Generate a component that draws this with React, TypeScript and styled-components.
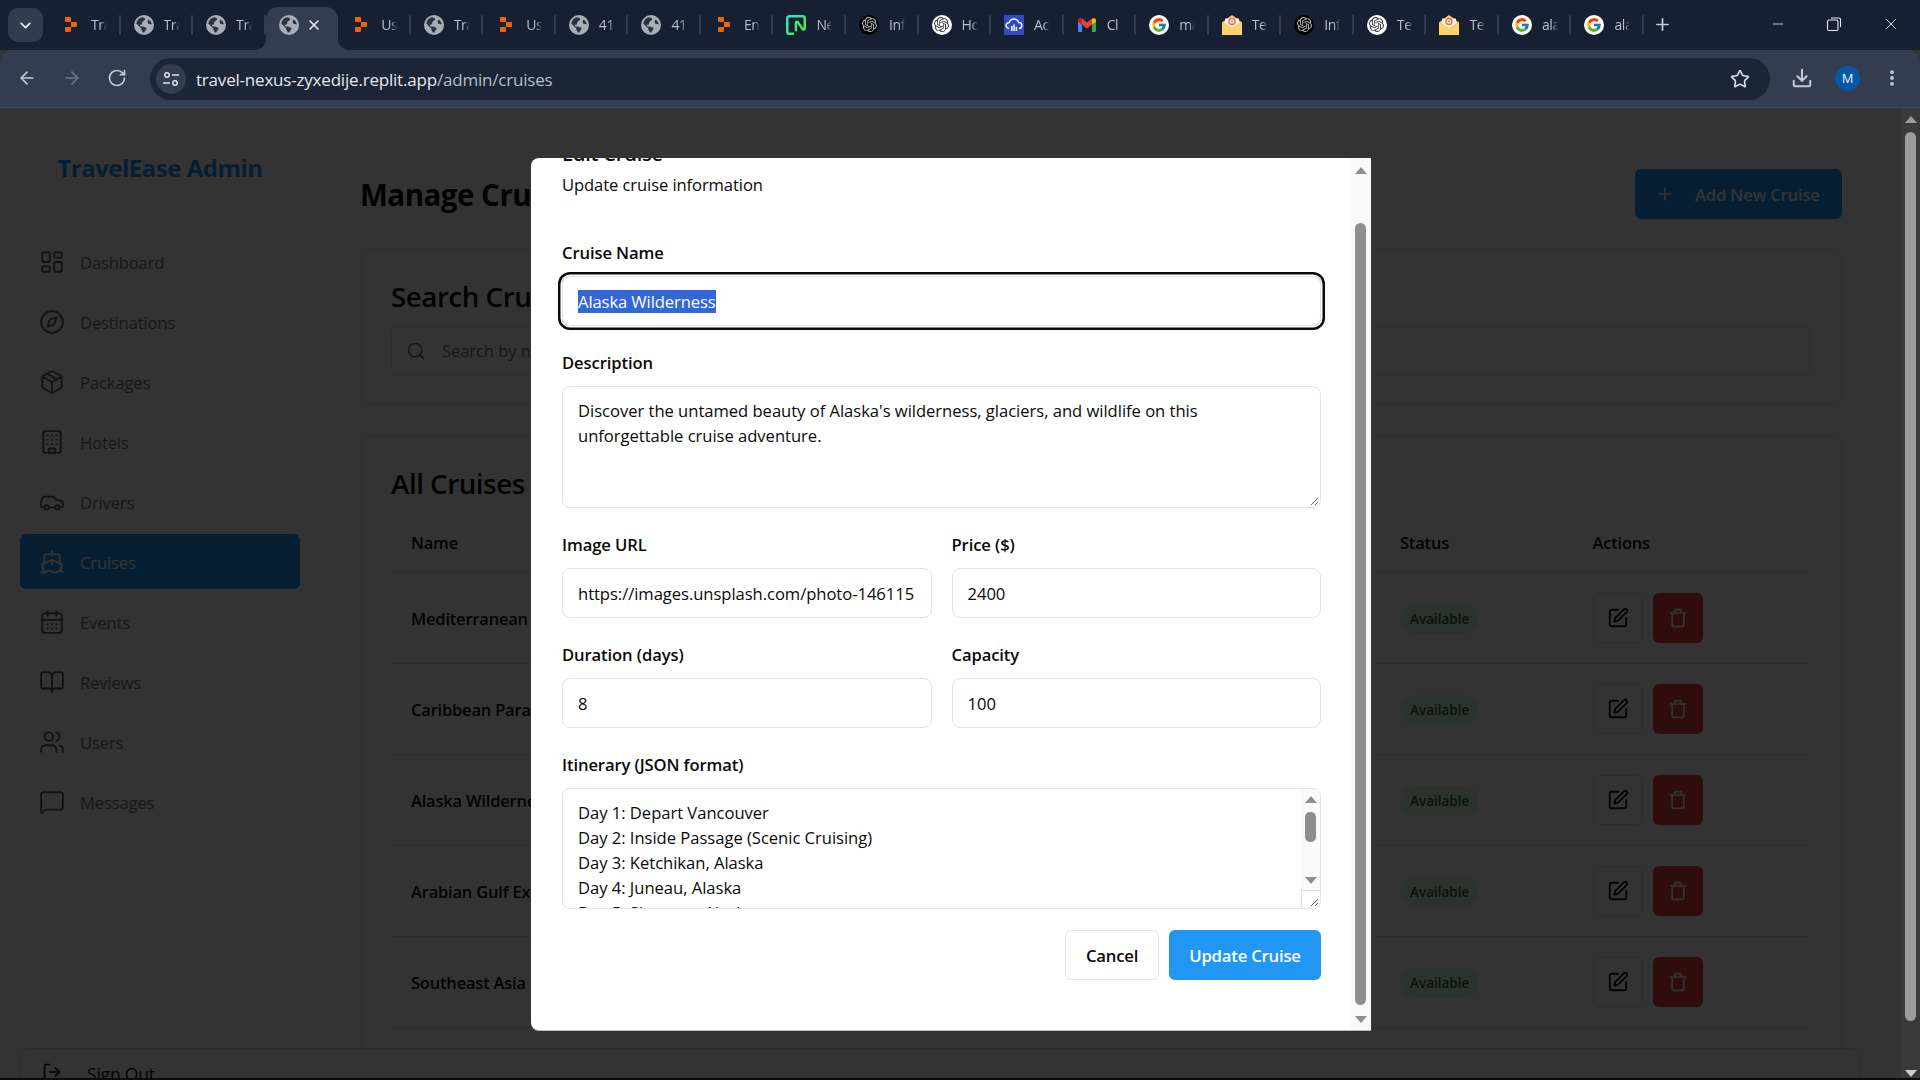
import React from "react";
import styled, { createGlobalStyle } from "styled-components";
import {
  ArrowLeft, ArrowRight, BookOpen, Building, CalendarDays, Car, ChevronDown, Compass, Download,
  EllipsisVertical, LayoutDashboard, LogOut, MessageSquare, Minus, Package, Plus, RotateCw, Search,
  Ship, SquarePen, Star, Trash, Users, X,
} from "lucide-react";
import { SiOpenai } from "react-icons/si";
import { FcGoogle } from "react-icons/fc";

const GlobalStyle = createGlobalStyle`
  html, body { margin: 0; padding: 0; background: #333; overflow: hidden; }
  * { box-sizing: border-box; }
  body { font-family: "Open Sans", "Noto Sans", sans-serif; }
`;

const Screen = styled.div`
  width: 1920px; height: 1080px; display: flex; flex-direction: column; overflow: hidden; position: relative;
`;

/* ---------- browser chrome ---------- */
const TabStrip = styled.div`
  height: 50px; background: #172032; display: flex; align-items: flex-start; flex-shrink: 0;
`;
const TabListButton = styled.div`
  width: 35px; height: 34px; margin: 8px 5px 0 8px; border-radius: 10px; background: #323c4f; color: #e3e7ee;
  display: flex; align-items: center; justify-content: center; flex-shrink: 0;
`;
const Tab = styled.div<{ $active?: boolean }>`
  width: 72.55px; height: 43px; margin-top: 7px; flex-shrink: 0; position: relative; display: flex; align-items: center;
  padding: 0 0 8px 10px; gap: 12px;
  border-radius: 12px 12px 0 0;
  background: ${(p) => (p.$active ? "#333d4f" : "transparent")};
  &::after {
    content: ""; position: absolute; right: 0; top: 8px; height: 20px; width: 2px; border-radius: 1px;
    background: ${(p) => (p.$active ? "transparent" : "#333c4e")};
  }
`;
const TabFlare = styled.span<{ $side: "left" | "right" }>`
  position: absolute; bottom: 0; width: 12px; height: 12px; ${(p) => p.$side}: -12px;
  background: radial-gradient(circle at ${(p) => (p.$side === "left" ? "0 0" : "100% 0")}, transparent 12px, #333d4f 12.5px);
`;
const FaviconSlot = styled.span`
  width: 20px; height: 20px; margin-left: 3px; display: flex; align-items: center; justify-content: center; flex-shrink: 0;
`;
const TabTitle = styled.span`
  font-size: 14px; color: #b8bfcb; white-space: nowrap; line-height: 20px; margin-left: -2px; letter-spacing: -0.4px;
  -webkit-mask-image: linear-gradient(90deg, #000 10px, transparent 16px);
  mask-image: linear-gradient(90deg, #000 10px, transparent 16px);
`;
const TabClose = styled.span`
  color: #e6e9ef; display: flex; margin-left: -5px;
`;
const NewTab = styled.div`
  color: #c6ccd7; margin: 15px 0 0 9px; display: flex;
`;
const WindowControls = styled.div`
  margin-left: auto; display: flex; align-items: center; height: 48px; padding-right: 20px; gap: 40px; color: #e6e9ef;
`;
const RestoreIcon = styled.svg`
  width: 16px; height: 16px;
`;
const Toolbar = styled.div`
  height: 58px; background: #333d4f; border-radius: 12px 12px 0 0; flex-shrink: 0; display: flex; align-items: flex-start;
  border-bottom: 1px solid #484848; padding: 8px 0 0 17px; color: #c3c9d4; position: relative;
`;
const NavButtons = styled.div`
  display: flex; gap: 25px; align-items: center; height: 42px; margin-top: -1px; width: 133px; flex-shrink: 0;
`;
const Omnibox = styled.div`
  width: 1620px; height: 42px; border-radius: 21px; background: #1c2535; display: flex; align-items: center; padding: 0 20px 0 6px;
`;
const SiteInfo = styled.div`
  width: 30px; height: 30px; border-radius: 50%; background: #333d4f; display: flex; align-items: center; justify-content: center; flex-shrink: 0;
`;
const Url = styled.div`
  margin-left: 10px; padding-top: 1px; font-size: 17px; letter-spacing: -0.2px; color: #e4e7ec; flex: 1; white-space: nowrap;
`;
const UrlPath = styled.span`
  color: #b6bcc8;
`;
const ToolbarActions = styled.div`
  display: flex; align-items: center; height: 42px; margin-top: -1px; padding-left: 21px; gap: 22px;
`;
const Avatar = styled.div`
  width: 25px; height: 25px; border-radius: 50%; background: #0458a4; color: #e9f1fa; font-size: 13px;
  display: flex; align-items: center; justify-content: center;
`;

/* ---------- page ---------- */
const Viewport = styled.div`
  flex: 1; position: relative; overflow: hidden; display: flex; background: #3a3a3a;
`;
const Page = styled.div`
  width: 1901px; flex-shrink: 0; background: #fff; display: flex; flex-direction: column; color: #0a0a0a;
`;
const PageColumns = styled.div`
  height: 940px; display: flex; overflow: hidden; flex-shrink: 0;
`;
const Sidebar = styled.aside`
  width: 361px; flex-shrink: 0; padding: 40px 61px 0 20px;
`;
const Brand = styled.div`
  font-size: 24px; font-weight: 700; color: #2196f3; text-align: center; line-height: 40px; letter-spacing: -0.5px; margin-bottom: 46px;
`;
const NavItem = styled.div<{ $active?: boolean }>`
  height: 55px; margin-bottom: 5px; border-radius: 6px; display: flex; align-items: center; padding-left: 19px; gap: 15px;
  font-size: 16.7px; letter-spacing: -0.2px;
  color: ${(p) => (p.$active ? "#fff" : "#737373")};
  background: ${(p) => (p.$active ? "#2196f3" : "transparent")};
  & svg { color: ${(p) => (p.$active ? "#fff" : "#555")}; flex-shrink: 0; }
`;
const NavLabel = styled.span`
  padding-top: 1px;
`;
const Main = styled.main`
  flex: 1; padding: 61px 59px 0 0; min-width: 0;
`;
const PageHeader = styled.div`
  display: flex; justify-content: space-between; align-items: center; height: 50px; margin-bottom: 30px;
`;
const PageTitle = styled.h1`
  margin: 0 0 0 -1px; font-size: 29.5px; font-weight: 700; letter-spacing: -0.5px;
`;
const AddButton = styled.div`
  width: 207px; height: 50px; background: #2196f3; border-radius: 6px; color: #fff; display: flex; align-items: center;
  padding-left: 20px; gap: 20px; font-size: 16.7px; font-weight: 600; letter-spacing: -0.2px;
`;
const Card = styled.section`
  border: 1px solid #e5e5e5; border-radius: 8px; padding: 29px 31px 29px 29px; margin-bottom: 31px; background: #fff;
`;
const CardTitle = styled.h2`
  margin: 0; font-size: 27.8px; font-weight: 600; letter-spacing: -0.5px; line-height: 34px;
`;
const SearchBox = styled.div`
  margin-top: 13px; height: 49px; border: 1px solid #e5e5e5; border-radius: 6px; display: flex; align-items: center;
  padding-left: 14px; gap: 16px; color: #737373; font-size: 16.6px; letter-spacing: -0.1px;
`;
const TableGrid = styled.div`
  margin-top: 12px;
`;
const TableRow = styled.div<{ $header?: boolean }>`
  display: grid; grid-template-columns: 989px 192.5px 1fr; align-items: center; padding-left: 20px;
  height: ${(p) => (p.$header ? "61px" : "91px")}; border-bottom: 1px solid #e5e5e5;
  font-size: 16.5px; font-weight: 600; letter-spacing: -0.2px;
`;
const StatusCell = styled.div`
  display: flex; padding-top: 2px;
`;
const Badge = styled.span`
  display: inline-flex; align-items: center; height: 30px; padding: 0 10px; border-radius: 15px; background: #dcfce7; color: #166534;
  font-size: 13.5px; font-weight: 600; letter-spacing: 0;
`;
const Actions = styled.div`
  display: flex; gap: 10px;
`;
const IconButton = styled.div<{ $danger?: boolean }>`
  width: 50px; height: 50px; border-radius: 6px; display: flex; align-items: center; justify-content: center;
  border: ${(p) => (p.$danger ? "none" : "1px solid #e5e5e5")};
  background: ${(p) => (p.$danger ? "#ef4444" : "#fff")};
  color: ${(p) => (p.$danger ? "#fff" : "#0a0a0a")};
`;
const SignOutBar = styled.div`
  margin: 0 41px 0 20px; height: 60px; border: 1px solid #e5e5e5; border-radius: 8px 8px 0 0; display: flex; align-items: flex-start;
  padding: 13px 0 0 21px; gap: 25px; font-size: 17.5px; font-weight: 500; letter-spacing: -0.2px; color: #0a0a0a;
`;
const PageScrollbar = styled.div`
  width: 19px; flex-shrink: 0; display: flex; flex-direction: column; align-items: center; padding: 8px 0 0 0; background: #3a3a3a;
`;
const ArrowUp = styled.div<{ $color: string; $size?: number }>`
  width: 0; height: 0; flex-shrink: 0;
  border-left: ${(p) => p.$size ?? 6}px solid transparent; border-right: ${(p) => p.$size ?? 6}px solid transparent;
  border-bottom: ${(p) => (p.$size ?? 6) + 1}px solid ${(p) => p.$color};
`;
const ArrowDown = styled.div<{ $color: string; $size?: number }>`
  width: 0; height: 0; flex-shrink: 0;
  border-left: ${(p) => p.$size ?? 6}px solid transparent; border-right: ${(p) => p.$size ?? 6}px solid transparent;
  border-top: ${(p) => (p.$size ?? 6) + 1}px solid ${(p) => p.$color};
`;
const PageThumb = styled.div`
  width: 11px; height: 889px; margin: 9px 0 49px; border-radius: 6px; background: #9c9c9c; flex-shrink: 0;
`;
const BottomEdge = styled.div`
  position: absolute; left: 0; right: 0; bottom: 0; height: 2px; background: #0c0c0c; z-index: 5;
`;

/* ---------- modal ---------- */
const Overlay = styled.div`
  position: absolute; top: 0; left: 0; bottom: 0; width: 1901px; background: rgba(0, 0, 0, 0.8);
  display: flex; align-items: center; justify-content: center;
`;
const Modal = styled.div`
  width: 840px; height: 872px; background: #fff; border-radius: 8px 0 0 8px; display: flex; overflow: hidden; color: #0a0a0a;
  margin: 0 0 0 1px; box-shadow: 0 1px 0 #bbb;
`;
const ModalBody = styled.div`
  flex: 1; min-width: 0; padding: 0 29px 0 31px;
`;
const ModalTitle = styled.h2`
  margin: -18px 0 4px; height: 28px; font-size: 20px; line-height: 28px; font-weight: 600; letter-spacing: -0.2px;
`;
const ModalSubtitle = styled.p`
  margin: 0 0 44px; font-size: 16.6px; line-height: 25px; letter-spacing: -0.1px; color: #0a0a0a;
`;
const Field = styled.div`
  margin-bottom: 25px; min-width: 0;
`;
const FieldRow = styled.div`
  display: grid; grid-template-columns: 369.5px 369.5px; column-gap: 20px;
`;
const Label = styled.div`
  font-size: 16.6px; font-weight: 600; line-height: 24px; letter-spacing: -0.1px; margin-bottom: 11px;
`;
const TextBox = styled.div<{ $focused?: boolean }>`
  height: 50px; border: 1px solid #e5e5e5; border-radius: 8px; padding: 0 12px 0 15px; display: flex; align-items: center;
  font-size: 16.6px; letter-spacing: -0.05px; white-space: nowrap;
  box-shadow: ${(p) => (p.$focused ? "0 0 0 1.5px #fff, 0 0 0 4px #0a0a0a" : "none")};
`;
const Selected = styled.span`
  background: #3367d6; color: #fff; line-height: 23px; letter-spacing: -0.1px;
`;
const TextArea = styled.div<{ $height: number }>`
  height: ${(p) => p.$height}px; border: 1px solid #e5e5e5; border-radius: 8px; padding: 11px 15px; position: relative; overflow: hidden;
  font-size: 16.6px; line-height: 25px; letter-spacing: -0.03px; white-space: pre-wrap;
`;
const Grip = styled.svg`
  position: absolute; right: 1px; bottom: 1px; width: 11px; height: 11px;
`;
const InnerScrollbar = styled.div`
  position: absolute; top: 0; right: 0; bottom: 0; width: 19px; background: #fafafa; display: flex; flex-direction: column; align-items: center; padding-top: 7px;
`;
const InnerThumb = styled.div`
  width: 11px; height: 30px; margin: 9px 0 35px; border-radius: 5px; background: #8e8e8e; flex-shrink: 0;
`;
const InnerCorner = styled.div`
  position: absolute; right: 0; bottom: 0; width: 19px; height: 18px; background: #fff; border: 1px solid #e0e0e0; border-right: none; border-bottom: none;
`;
const ModalActions = styled.div`
  display: flex; justify-content: flex-end; gap: 10px; margin-top: -4px;
`;
const ModalButton = styled.div<{ $primary?: boolean }>`
  height: 50px; border-radius: 6px; display: flex; align-items: center; justify-content: center; font-size: 16.7px; font-weight: 600; letter-spacing: -0.2px;
  width: ${(p) => (p.$primary ? "152px" : "94px")};
  background: ${(p) => (p.$primary ? "#2196f3" : "#fff")};
  color: ${(p) => (p.$primary ? "#fff" : "#0a0a0a")};
  border: ${(p) => (p.$primary ? "none" : "1px solid #e5e5e5")};
`;
const ModalScrollbar = styled.div`
  width: 21px; flex-shrink: 0; background: #f9f9f9; display: flex; flex-direction: column; align-items: center; padding: 9px 0 0 0;
`;
const ModalThumb = styled.div`
  width: 11px; height: 782px; margin: 49px 0 11px; border-radius: 6px; background: #8e8e8e; flex-shrink: 0;
`;

/* ---------- favicons ---------- */
const ReplitIcon = () => (
  <svg width="20" height="20" viewBox="0 0 20 20">
    <path d="M4 2h5a1 1 0 0 1 1 1v4H5a1 1 0 0 1-1-1zM10 7h5a1 1 0 0 1 1 1v3a1 1 0 0 1-1 1h-5zM5 12h5v4a1 1 0 0 1-1 1H5a1 1 0 0 1-1-1v-3a1 1 0 0 1 1-1z" fill="#f26207" />
  </svg>
);
const GlobeIcon = () => (
  <svg width="20" height="20" viewBox="0 0 20 20">
    <circle cx="10" cy="10" r="10" fill="#a9aeb6" />
    <path d="M8 2.300C5 3 3 5 2.300 8.400l5 5v1.200l1.600 2.900h1c.4 0 .7-.3.6-.6l1.900-3c.3-.4.2-1-.2-1.200L9 11.500H6.500L5.800 9.800l2-.4.8-3 2.400-1.300-.3-2zM14.500 4.600l-1 1.900.9 2.200 3.400.8C17.600 7.600 16.400 5.700 14.500 4.600z" fill="#2b3342" />
  </svg>
);
const NeonIcon = () => (
  <svg width="20" height="20" viewBox="0 0 24 24">
    <defs>
      <linearGradient id="neon" x1="0" y1="0" x2="1" y2="1">
        <stop offset="0" stopColor="#2ce8c5" />
        <stop offset="1" stopColor="#5fe32f" />
      </linearGradient>
    </defs>
    <path d="M9.500 22.500H4a2.500 2.500 0 0 1-2.500-2.500V4A2.500 2.500 0 0 1 4 1.500h16A2.500 2.500 0 0 1 22.500 4v12c0 1.500-2 2-2.800.7l-5.300-7.900c-.8-1.200-2.500-.6-2.500.8v10" fill="none" stroke="url(#neon)" strokeWidth="3" />
  </svg>
);
const OpenAiDisc = styled.span<{ $dark?: boolean }>`
  width: 20px; height: 20px; border-radius: 50%; display: flex; align-items: center; justify-content: center;
  background: ${(p) => (p.$dark ? "#000" : "#fff")};
  color: ${(p) => (p.$dark ? "#bbb" : "#333")};
`;
const OpenAiIcon = ({ $dark }: { $dark?: boolean }) => (
  <OpenAiDisc $dark={$dark}>
    <SiOpenai size={15} />
  </OpenAiDisc>
);
const CloudIcon = () => (
  <svg width="20" height="20" viewBox="0 0 20 20">
    <rect width="20" height="20" fill="#3049c4" />
    <path d="M5 13.500a3 3 0 0 1 .2-6A5 5 0 0 1 14.700 7.500a3 3 0 0 1 .3 6" fill="none" stroke="#fff" strokeWidth="1.400" />
    <path d="M7 11h1.500v5H7zM9.300 9.500h1.500V16H9.300zM11.600 12h1.500v4h-1.500z" fill="#fff" />
  </svg>
);
const GmailIcon = () => (
  <svg width="20" height="20" viewBox="0 0 20 20">
    <path d="M1 5.500v10.500a1 1 0 0 0 1 1h3V9.500z" fill="#4285f4" />
    <path d="M19 5.500V16a1 1 0 0 1-1 1h-3V9.500z" fill="#34a853" />
    <path d="M15 3.500v6l4-3V5c0-1.500-1.700-2.300-3-1.500z" fill="#fbbc04" />
    <path d="M5 9.500v-6l5 4 5-4v6l-5 4z" fill="#ea4335" />
    <path d="M1 5v1.500l4 3v-6l-1-.5C2.700 2.300 1 3.500 1 5z" fill="#c5221f" />
  </svg>
);
const GoogleDisc = styled.span`
  width: 20px; height: 20px; border-radius: 50%; background: #fff; display: flex; align-items: center; justify-content: center;
`;
const GoogleIcon = () => (
  <GoogleDisc>
    <FcGoogle size={16} />
  </GoogleDisc>
);
const MailIcon = () => (
  <svg width="20" height="20" viewBox="0 0 20 20">
    <path d="M0 7.500 10 0l10 7.500V20H0z" fill="#ffd36b" />
    <path d="M3 9V3.500h14V9l-7 4.500z" fill="#fff3dc" />
    <circle cx="10" cy="6.500" r="3" fill="none" stroke="#ee6a4d" strokeWidth="1.300" />
    <circle cx="10" cy="6.500" r="1" fill="#ee6a4d" />
    <path d="M0 7.500 10 14l10-6.500" fill="none" stroke="#f3b94a" strokeWidth=".7" />
  </svg>
);

type Fav = "replit" | "globe" | "neon" | "aiDark" | "aiLight" | "cloud" | "gmail" | "google" | "mail";
const Favicon = ({ kind }: { kind: Fav }) => {
  switch (kind) {
    case "replit": return <ReplitIcon />;
    case "globe": return <GlobeIcon />;
    case "neon": return <NeonIcon />;
    case "aiDark": return <OpenAiIcon $dark />;
    case "aiLight": return <OpenAiIcon />;
    case "cloud": return <CloudIcon />;
    case "gmail": return <GmailIcon />;
    case "google": return <GoogleIcon />;
    default: return <MailIcon />;
  }
};

const tabs: { kind: Fav; title: string; active?: boolean }[] = [
  { kind: "replit", title: "Tra" }, { kind: "globe", title: "Tra" }, { kind: "globe", title: "Tra" },
  { kind: "globe", title: "Tra", active: true }, { kind: "replit", title: "Us" }, { kind: "globe", title: "Tra" },
  { kind: "replit", title: "Us" }, { kind: "globe", title: "41" }, { kind: "globe", title: "41" },
  { kind: "replit", title: "En" }, { kind: "neon", title: "Ne" }, { kind: "aiDark", title: "Inf" },
  { kind: "aiLight", title: "Ho" }, { kind: "cloud", title: "Ac" }, { kind: "gmail", title: "Cl" },
  { kind: "google", title: "ma" }, { kind: "mail", title: "Te" }, { kind: "aiDark", title: "Inf" },
  { kind: "aiLight", title: "Te" }, { kind: "mail", title: "Te" }, { kind: "google", title: "ala" },
  { kind: "google", title: "ala" },
];

const nav = [
  { label: "Dashboard", Icon: LayoutDashboard }, { label: "Destinations", Icon: Compass },
  { label: "Packages", Icon: Package }, { label: "Hotels", Icon: Building }, { label: "Drivers", Icon: Car },
  { label: "Cruises", Icon: Ship, active: true }, { label: "Events", Icon: CalendarDays },
  { label: "Reviews", Icon: BookOpen }, { label: "Users", Icon: Users }, { label: "Messages", Icon: MessageSquare },
];

const cruises = ["Mediterranean Explorer", "Caribbean Paradise", "Alaska Wilderness", "Arabian Gulf Explorer", "Southeast Asia Discovery"];

const GripLines = () => (
  <Grip viewBox="0 0 11 11">
    <path d="M10 3 3 10M10 7l-3 3" stroke="#666" strokeWidth="1" fill="none" />
  </Grip>
);

export default function App() {
  return (
    <Screen>
      <GlobalStyle />
      <TabStrip>
        <TabListButton><ChevronDown size={17} strokeWidth={2.6} /></TabListButton>
        {tabs.map((t, i) => (
          <Tab key={i} $active={t.active}>
            {t.active && <TabFlare $side="left" />}
            <FaviconSlot><Favicon kind={t.kind} /></FaviconSlot>
            {t.active ? <TabClose><X size={16} strokeWidth={2.4} /></TabClose> : <TabTitle>{t.title}</TabTitle>}
            {t.active && <TabFlare $side="right" />}
          </Tab>
        ))}
        <NewTab><Plus size={19} strokeWidth={2.2} /></NewTab>
        <WindowControls>
          <Minus size={16} strokeWidth={1.3} />
          <RestoreIcon viewBox="0 0 16 16" fill="none" stroke="currentColor" strokeWidth="1.100">
            <rect x="1.500" y="4" width="10.500" height="10.500" rx="1.500" />
            <path d="M5 2h8a1.500 1.500 0 0 1 1.500 1.500V11" />
          </RestoreIcon>
          <X size={18} strokeWidth={1.2} />
        </WindowControls>
      </TabStrip>
      <Toolbar>
        <NavButtons>
          <ArrowLeft size={20} />
          <ArrowRight size={20} color="#6f7788" />
          <RotateCw size={20} />
        </NavButtons>
        <Omnibox>
          <SiteInfo>
            <svg width="18" height="18" viewBox="0 0 18 18" fill="none" stroke="#dfe3ea" strokeWidth="1.500">
              <circle cx="5" cy="5" r="2.200" />
              <path d="M10 5h7M1 13h7" />
              <circle cx="13" cy="13" r="2.200" />
            </svg>
          </SiteInfo>
          <Url>travel-nexus-zyxedije.replit.app<UrlPath>/admin/cruises</UrlPath></Url>
          <Star size={20} color="#d6dae2" strokeWidth={2} />
        </Omnibox>
        <ToolbarActions>
          <Download size={22} strokeWidth={2.2} />
          <Avatar>M</Avatar>
          <EllipsisVertical size={20} strokeWidth={2.6} />
        </ToolbarActions>
      </Toolbar>
      <Viewport>
        <Page>
          <PageColumns>
            <Sidebar>
              <Brand>TravelEase Admin</Brand>
              {nav.map(({ label, Icon, active }) => (
                <NavItem key={label} $active={active}>
                  <Icon size={26} strokeWidth={1.7} />
                  <NavLabel>{label}</NavLabel>
                </NavItem>
              ))}
            </Sidebar>
            <Main>
              <PageHeader>
                <PageTitle>Manage Cruises</PageTitle>
                <AddButton><Plus size={20} strokeWidth={2} />Add New Cruise</AddButton>
              </PageHeader>
              <Card>
                <CardTitle>Search Cruises</CardTitle>
                <SearchBox><Search size={20} />Search by name...</SearchBox>
              </Card>
              <Card>
                <CardTitle>All Cruises</CardTitle>
                <TableGrid>
                  <TableRow $header><span>Name</span><span>Status</span><span>Actions</span></TableRow>
                  {cruises.map((name) => (
                    <TableRow key={name}>
                      <span>{name}</span>
                      <StatusCell><Badge>Available</Badge></StatusCell>
                      <Actions>
                        <IconButton><SquarePen size={22} /></IconButton>
                        <IconButton $danger><Trash size={20} /></IconButton>
                      </Actions>
                    </TableRow>
                  ))}
                </TableGrid>
              </Card>
            </Main>
          </PageColumns>
          <SignOutBar><LogOut size={20} />Sign Out</SignOutBar>
        </Page>
        <PageScrollbar>
          <ArrowUp $color="#9c9c9c" />
          <PageThumb />
          <ArrowDown $color="#cfcfcf" />
        </PageScrollbar>
        <Overlay>
          <Modal>
            <ModalBody>
              <ModalTitle>Edit Cruise</ModalTitle>
              <ModalSubtitle>Update cruise information</ModalSubtitle>
              <Field>
                <Label>Cruise Name</Label>
                <TextBox $focused><Selected>Alaska Wilderness</Selected></TextBox>
              </Field>
              <Field>
                <Label>Description</Label>
                <TextArea $height={122}>
                  {"Discover the untamed beauty of Alaska's wilderness, glaciers, and wildlife on this\nunforgettable cruise adventure."}
                  <GripLines />
                </TextArea>
              </Field>
              <FieldRow>
                <Field>
                  <Label>Image URL</Label>
                  <TextBox>https://images.unsplash.com/photo-146115</TextBox>
                </Field>
                <Field>
                  <Label>Price ($)</Label>
                  <TextBox>2400</TextBox>
                </Field>
              </FieldRow>
              <FieldRow>
                <Field>
                  <Label>Duration (days)</Label>
                  <TextBox>8</TextBox>
                </Field>
                <Field>
                  <Label>Capacity</Label>
                  <TextBox>100</TextBox>
                </Field>
              </FieldRow>
              <Field>
                <Label>Itinerary (JSON format)</Label>
                <TextArea $height={121}>
                  {"Day 1: Depart Vancouver\nDay 2: Inside Passage (Scenic Cruising)\nDay 3: Ketchikan, Alaska\nDay 4: Juneau, Alaska\nDay 5: Skagway, Alaska"}
                  <InnerScrollbar>
                    <ArrowUp $color="#8e8e8e" />
                    <InnerThumb />
                    <ArrowDown $color="#8e8e8e" />
                  </InnerScrollbar>
                  <InnerCorner><GripLines /></InnerCorner>
                </TextArea>
              </Field>
              <ModalActions>
                <ModalButton>Cancel</ModalButton>
                <ModalButton $primary>Update Cruise</ModalButton>
              </ModalActions>
            </ModalBody>
            <ModalScrollbar>
              <ArrowUp $color="#8e8e8e" />
              <ModalThumb />
              <ArrowDown $color="#8e8e8e" />
            </ModalScrollbar>
          </Modal>
        </Overlay>
        <BottomEdge />
      </Viewport>
    </Screen>
  );
}
